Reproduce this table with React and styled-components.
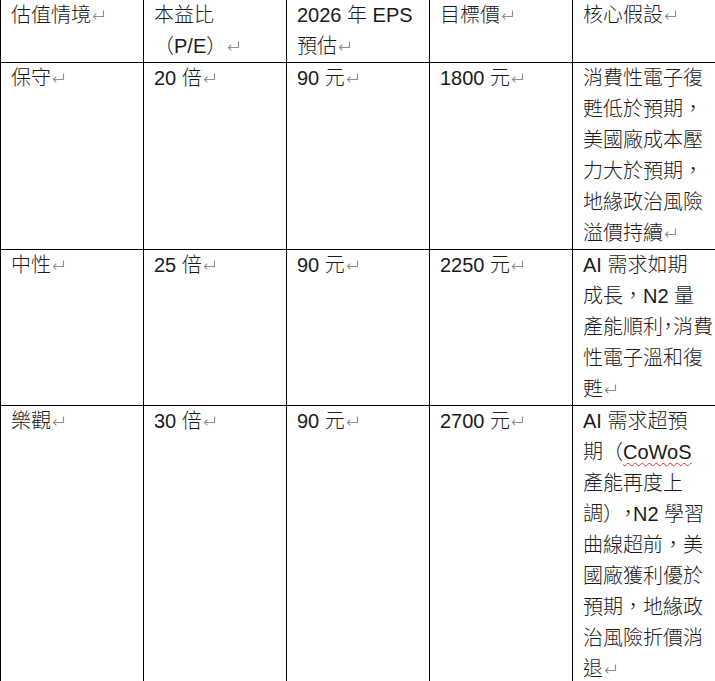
import React from "react";
import styled, { createGlobalStyle } from "styled-components";

const GlobalStyle = createGlobalStyle`
    html, body {
        margin: 0;
        padding: 0;
        background: #ffffff;
        overflow: hidden;
    }
`;

const Table = styled.div`
    display: grid;
    grid-template-columns: 144px 143px 143px 143px 143px;
    width: 716px;
    font-family: "Liberation Sans", "Noto Sans CJK TC", sans-serif;
    font-size: 20px;
    font-weight: 300;
    line-height: 31px;
    color: #1a1a1a;
`;

const Cell = styled.div`
    box-sizing: border-box;
    padding: 0 4px 0 10px;
    border-right: 1px solid #000;
    border-bottom: 1px solid #000;
    border-left: ${props => (props.$first ? "1px solid #000" : "none")};
    white-space: nowrap;
    overflow: hidden;
`;

const Line = styled.div`
    height: 31px;
`;

const Half = styled.span`
    font-feature-settings: "halt";
`;

const Full = styled.span`
    text-spacing-trim: space-all;
`;

const Squiggle = styled.span`
    text-decoration: underline wavy #e0322b;
    text-decoration-thickness: 1px;
    text-underline-offset: 3px;
    text-decoration-skip-ink: none;
`;

const MarkSvg = styled.svg`
    display: inline-block;
    width: 13px;
    height: 10px;
    margin-left: 1px;
    vertical-align: 2px;
`;

const Mark = () => (
    <MarkSvg viewBox="0 0 13 10">
        <path
            d="M11.5 0.5 V6.5 H1.5 M4.3 3.7 L1.5 6.5 L4.3 9.3"
            fill="none"
            stroke="#8e8e8e"
            strokeWidth="1.1"
        />
    </MarkSvg>
);

const rows = [
    [
        [<>估值情境<Mark /></>],
        ["本益比", <>（P/E）<Mark /></>],
        ["2026 年 EPS", <>預估<Mark /></>],
        [<>目標價<Mark /></>],
        [<>核心假設<Mark /></>],
    ],
    [
        [<>保守<Mark /></>],
        [<>20 倍<Mark /></>],
        [<>90 元<Mark /></>],
        [<>1800 元<Mark /></>],
        [
            "消費性電子復",
            "甦低於預期，",
            "美國廠成本壓",
            "力大於預期，",
            "地緣政治風險",
            <>溢價持續<Mark /></>,
        ],
    ],
    [
        [<>中性<Mark /></>],
        [<>25 倍<Mark /></>],
        [<>90 元<Mark /></>],
        [<>2250 元<Mark /></>],
        [
            "AI 需求如期",
            "成長，N2 量",
            <>產能順利<Half>，</Half>消費</>,
            "性電子溫和復",
            <>甦<Mark /></>,
        ],
    ],
    [
        [<>樂觀<Mark /></>],
        [<>30 倍<Mark /></>],
        [<>90 元<Mark /></>],
        [<>2700 元<Mark /></>],
        [
            "AI 需求超預",
            <>期（<Squiggle>CoWoS</Squiggle></>,
            "產能再度上",
            <><Full>調）</Full><Half>，</Half>N2 學習</>,
            "曲線超前，美",
            "國廠獲利優於",
            "預期，地緣政",
            "治風險折價消",
            <>退<Mark /></>,
        ],
    ],
];

const App = () => {
    return (
        <>
            <GlobalStyle />
            <Table>
                {rows.map((row, r) =>
                    row.map((lines, c) => (
                        <Cell key={`${r}-${c}`} $first={c === 0}>
                            {lines.map((line, i) => (
                                <Line key={i}>{line}</Line>
                            ))}
                        </Cell>
                    )),
                )}
            </Table>
        </>
    );
};

export default App;
